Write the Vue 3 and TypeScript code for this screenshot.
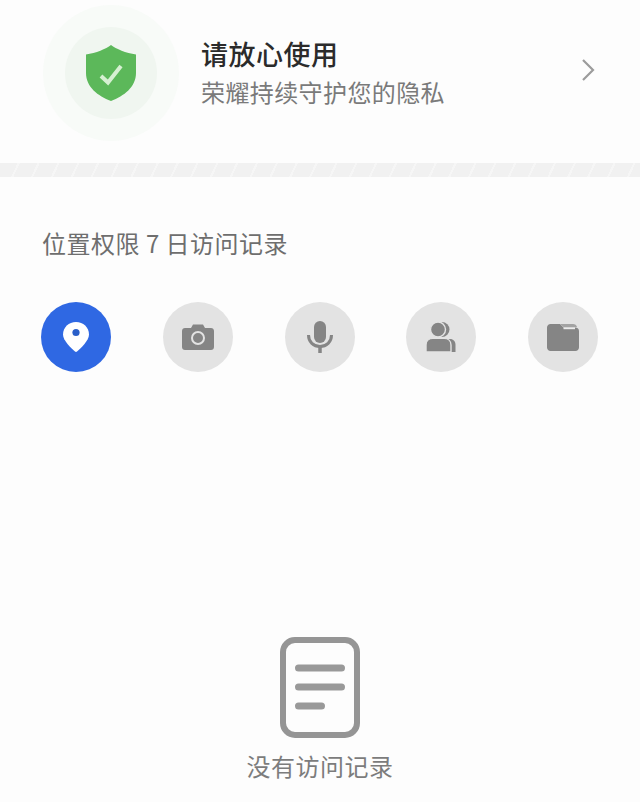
<script setup lang="ts">
interface PermissionItem {
  key: string
  active?: boolean
}

const permissions: PermissionItem[] = [
  { key: 'location', active: true },
  { key: 'camera' },
  { key: 'mic' },
  { key: 'contacts' },
  { key: 'files' }
]
</script>

<template>
  <div class="page">
    <div class="privacy-card">
      <div class="halo-outer">
        <div class="halo-inner">
          <svg class="shield" width="50" height="56" viewBox="0 0 50 56">
            <path d="M25 0 C30 4 40 8 50 9.5 V28 C50 42 38 51 25 56 C12 51 0 42 0 28 V9.5 C10 8 20 4 25 0 Z" fill="#5cb85a" />
            <path d="M15 31 L22 37.5 L35 21" fill="none" stroke="#d6f0d2" stroke-width="4" />
          </svg>
        </div>
      </div>
      <div class="privacy-text">
        <div class="privacy-title">请放心使用</div>
        <div class="privacy-sub">荣耀持续守护您的隐私</div>
      </div>
      <svg class="chevron" width="14" height="24" viewBox="0 0 14 24">
        <path d="M2 2 L12 12 L2 22" fill="none" stroke="#9c9c9c" stroke-width="2.2" />
      </svg>
    </div>

    <div class="divider"></div>

    <div class="section-title">位置权限 7 日访问记录</div>

    <div class="perm-row">
      <div
        v-for="item in permissions"
        :key="item.key"
        class="perm-btn"
        :class="{ active: item.active }"
      >
        <svg v-if="item.key === 'location'" width="26" height="30" viewBox="0 0 26 30">
          <path d="M13 0 C5.8 0 0 5.4 0 12.500 C0 18.500 8 26 12 29.500 Q13 30.300 14 29.500 C18 26 26 18.500 26 12.500 C26 5.400 20.200 0 13 0 Z" fill="#fff" />
          <circle cx="13" cy="10.5" r="3.6" fill="#2a5fc9" />
        </svg>
        <svg v-else-if="item.key === 'camera'" width="32" height="26" viewBox="0 0 32 26">
          <path d="M3 4 H9 L11 0.5 H21 L23 4 H29 C30.7 4 32 5.3 32 7 V23 C32 24.7 30.7 26 29 26 H3 C1.3 26 0 24.7 0 23 V7 C0 5.3 1.3 4 3 4 Z" fill="#858585" />
          <circle cx="16" cy="14" r="6" fill="none" stroke="#e3e3e3" stroke-width="2" />
        </svg>
        <svg v-else-if="item.key === 'mic'" width="26" height="32" viewBox="0 0 26 32">
          <rect x="7" y="0" width="12" height="22" rx="6" fill="#858585" />
          <path d="M1.5 14 C1.5 21 6.5 25.5 13 25.5 C19.5 25.5 24.5 21 24.5 14" fill="none" stroke="#858585" stroke-width="3" />
          <path d="M13 25 V32" stroke="#858585" stroke-width="3.5" />
        </svg>
        <svg v-else-if="item.key === 'contacts'" width="30" height="30" viewBox="0 0 30 30">
          <circle cx="16" cy="7.5" r="7.5" fill="#858585" />
          <path d="M8 30 V17 H24 C27.5 17 29.5 19.5 29.5 23 V30 Z" fill="#858585" />
          <circle cx="12" cy="7.5" r="7.5" fill="#858585" stroke="#e3e3e3" stroke-width="1.4" />
          <path d="M0 30 V23 C0 19 3 16.4 7 16.4 H18 C22 16.4 25 19 25 23 V30 Z" fill="#858585" stroke="#e3e3e3" stroke-width="1.4" />
        </svg>
        <svg v-else width="32" height="27" viewBox="0 0 32 27">
          <path d="M3.500 0 H13 L16.500 3.500 H28.500 C30.400 3.500 32 5 32 7 V23.500 C32 25.400 30.400 27 28.500 27 H3.500 C1.600 27 0 25.400 0 23.500 V3.500 C0 1.600 1.600 0 3.500 0 Z" fill="#858585" />
          <path d="M13 0 H26 C28 0 29.500 1 30 3 H16.500 Z" fill="#a3a3a3" />
          <path d="M16.500 4.300 H28" stroke="#ececec" stroke-width="1.800" />
        </svg>
      </div>
    </div>

    <div class="empty">
      <svg width="80" height="101" viewBox="0 0 80 101">
        <rect x="3" y="3" width="74" height="95" rx="12" fill="none" stroke="#959595" stroke-width="6" />
        <path d="M18.5 31 H61.500 M18.500 50 H61.500 M18.500 69 H41.500" stroke="#999" stroke-width="7" stroke-linecap="round" fill="none" />
      </svg>
      <div class="empty-text">没有访问记录</div>
    </div>
  </div>
</template>

<style>
html,
body {
  margin: 0;
  background: #fdfdfd;
}
</style>

<style scoped>
.page {
  display: flex;
  flex-direction: column;
  width: 640px;
  height: 802px;
  overflow: hidden;
  background: #fdfdfd;
  font-family: 'Noto Sans CJK SC', 'Noto Sans', sans-serif;
}

.privacy-card {
  display: flex;
  align-items: center;
  height: 163px;
  padding: 0 45px 18px 43px;
  box-sizing: border-box;
}

.halo-outer {
  display: flex;
  align-items: center;
  justify-content: center;
  flex-shrink: 0;
  width: 136px;
  height: 136px;
  border-radius: 50%;
  background: #f8fbf8;
}

.halo-inner {
  display: flex;
  align-items: center;
  justify-content: center;
  width: 92px;
  height: 92px;
  border-radius: 50%;
  background: #f0f6f0;
}

.privacy-text {
  flex: 1;
  margin-left: 22px;
}

.privacy-title {
  font-size: 27px;
  line-height: 36px;
  font-weight: 500;
  letter-spacing: 0.5px;
  color: #2b2b2b;
}

.privacy-sub {
  margin-top: 2px;
  font-size: 24px;
  line-height: 36px;
  letter-spacing: 0.4px;
  color: #7a7a7a;
}

.chevron {
  margin-top: -5px;
}

.divider {
  height: 14px;
  flex-shrink: 0;
  background: repeating-linear-gradient(115deg, #f1f1f1 0 16px, #f6f6f6 16px 18px);
}

.section-title {
  margin: 48px 0 0 42px;
  font-size: 24px;
  line-height: 36px;
  letter-spacing: 0.5px;
  color: #6e6e6e;
}

.perm-row {
  display: flex;
  justify-content: space-between;
  margin-top: 41px;
  padding: 0 42px 0 41px;
}

.perm-btn {
  display: flex;
  align-items: center;
  justify-content: center;
  width: 70px;
  height: 70px;
  border-radius: 50%;
  background: #e3e3e3;
}

.perm-btn.active {
  background: #2f68e3;
}

.empty {
  display: flex;
  flex-direction: column;
  align-items: center;
  margin-top: 265px;
}

.empty-text {
  margin-top: 10px;
  font-size: 24px;
  line-height: 36px;
  letter-spacing: 0.5px;
  color: #7c7c7c;
}
</style>
